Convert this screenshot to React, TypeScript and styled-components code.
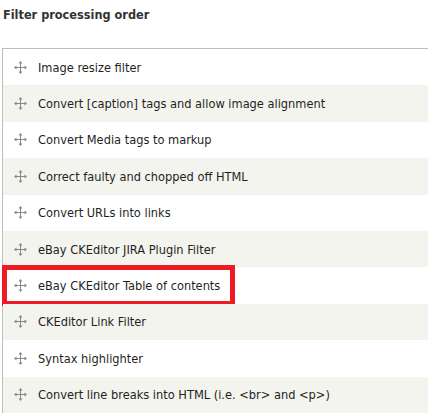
import React from "react";
import styled, { createGlobalStyle } from "styled-components";

const Global = createGlobalStyle`
  html, body { margin: 0; padding: 0; background: #fff; }
  body { font-family: "DejaVu Sans Condensed", "DejaVu Sans", Verdana, sans-serif; font-stretch: condensed; color: #1f1f1f; }
`;

const Page = styled.div`
  width: 428px;
  height: 414px;
  overflow: hidden;
  padding: 0 0 0 2px;
  box-sizing: border-box;
`;

const Title = styled.h3`
  margin: 0;
  padding: 7px 0 0 1px;
  height: 48px;
  box-sizing: border-box;
  font-size: 12.6px;
  font-weight: bold;
  color: #333;
`;

const Table = styled.div`
  border-top: 1px solid #bfbfba;
  border-left: 1px solid #bfbfba;
`;

const Row = styled.div<{ $odd: boolean }>`
  position: relative;
  height: 36.4px;
  display: flex;
  align-items: center;
  padding-left: 11px;
  background: ${(p) => (p.$odd ? "#f3f4ee" : "#ffffff")};
  font-size: 12.7px;
`;

const Handle = styled.svg`
  width: 13px;
  height: 13px;
  flex: none;
  margin-right: 11px;
`;

const Label = styled.span`
  white-space: nowrap;
`;

const Highlight = styled.div`
  position: absolute;
  left: -1px;
  top: -2px;
  width: 233px;
  bottom: -2px;
  border: 5px solid #ed1c24;
  box-sizing: border-box;
  pointer-events: none;
`;

const DragIcon = () => (
  <Handle viewBox="0 0 13 13">
    <g fill="#888">
      <rect x="6" y="1.5" width="1" height="10" />
      <rect x="1.5" y="6" width="10" height="1" />
      <path d="M6.5 0 L8.5 2.5 L4.5 2.5 Z" />
      <path d="M6.5 13 L8.5 10.5 L4.5 10.5 Z" />
      <path d="M0 6.5 L2.5 4.5 L2.5 8.5 Z" />
      <path d="M13 6.5 L10.5 4.5 L10.5 8.5 Z" />
    </g>
  </Handle>
);

const filters = [
  "Image resize filter",
  "Convert [caption] tags and allow image alignment",
  "Convert Media tags to markup",
  "Correct faulty and chopped off HTML",
  "Convert URLs into links",
  "eBay CKEditor JIRA Plugin Filter",
  "eBay CKEditor Table of contents",
  "CKEditor Link Filter",
  "Syntax highlighter",
  "Convert line breaks into HTML (i.e. <br> and <p>)",
];

export default function App() {
  return (
    <Page>
      <Global />
      <Title>Filter processing order</Title>
      <Table>
        {filters.map((f, i) => (
          <Row key={f} $odd={i % 2 === 1}>
            <DragIcon />
            <Label>{f}</Label>
            {i === 6 && <Highlight />}
          </Row>
        ))}
      </Table>
    </Page>
  );
}
